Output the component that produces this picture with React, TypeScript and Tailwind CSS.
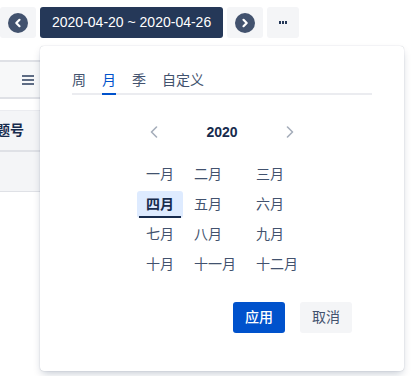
import { useState } from 'react';

const MONTHS = ['一月', '二月', '三月', '四月', '五月', '六月', '七月', '八月', '九月', '十月', '十一月', '十二月'];
const TABS = ['周', '月', '季', '自定义'];

function CircleChevron({ dir }: { dir: 'left' | 'right' }) {
  return (
    <svg width="20" height="20" viewBox="0 0 20 20">
      <circle cx="10" cy="10" r="10" fill="#42526E" />
      <path
        d={dir === 'left' ? 'M11.5 6.8 L8.3 10 L11.5 13.2' : 'M8.5 6.8 L11.7 10 L8.5 13.2'}
        stroke="#fff"
        strokeWidth="2.2"
        fill="none"
        strokeLinecap="round"
        strokeLinejoin="round"
      />
    </svg>
  );
}

function Chevron({ dir }: { dir: 'left' | 'right' }) {
  return (
    <svg width="8" height="12" viewBox="0 0 8 12">
      <path
        d={dir === 'left' ? 'M6.5 1 L1.5 6 L6.5 11' : 'M1.5 1 L6.5 6 L1.5 11'}
        stroke="#A5ADBA"
        strokeWidth="1.6"
        fill="none"
        strokeLinecap="round"
        strokeLinejoin="round"
      />
    </svg>
  );
}

export default function App() {
  const [tab, setTab] = useState(1);
  const [month, setMonth] = useState(3);

  return (
    <div
      className="relative w-[415px] h-[376px] bg-white overflow-hidden"
      style={{ fontFamily: '"Liberation Sans", "Noto Sans CJK SC", sans-serif' }}
    >
      <div className="flex gap-[4px] pt-[7px]">
        <button className="w-[36px] h-[31px] rounded-[3px] bg-[#F4F5F7] flex items-center justify-center">
          <CircleChevron dir="left" />
        </button>
        <button className="h-[31px] px-[12px] rounded-[3px] bg-[#253858] text-white text-[14px]">
          2020-04-20 ~ 2020-04-26
        </button>
        <button className="w-[36px] h-[31px] rounded-[3px] bg-[#F4F5F7] flex items-center justify-center">
          <CircleChevron dir="right" />
        </button>
        <button className="w-[32px] h-[31px] rounded-[3px] bg-[#F4F5F7] flex items-center justify-center gap-[1px]">
          <span className="w-[2px] h-[3px] bg-[#253858]" />
          <span className="w-[2px] h-[3px] bg-[#253858]" />
          <span className="w-[2px] h-[3px] bg-[#253858]" />
        </button>
      </div>

      {/* table behind the popup */}
      <div className="mt-[22px] w-[380px]">
        <div className="h-[39px] border-y-2 border-[#DFE1E6] bg-[#F7F8F9] flex items-center pl-[22px]">
          <svg width="12" height="10" viewBox="0 0 12 10">
            <rect x="0" y="0" width="12" height="2" fill="#5E6C84" />
            <rect x="0" y="4" width="12" height="2" fill="#5E6C84" />
            <rect x="0" y="8" width="12" height="2" fill="#5E6C84" />
          </svg>
        </div>
        <div className="h-[11px]" />
        <div className="h-[42px] border-t border-t-[#EBECF0] border-b-2 border-b-[#DFE1E6] bg-[#F4F5F7] flex items-center">
          <span className="ml-[-4px] text-[14px] font-semibold text-[#172B4D]">题号</span>
        </div>
        <div className="h-[40px] border-b border-[#DFE1E6] bg-[#F4F5F7]" />
      </div>

      {/* popup */}
      <div className="absolute left-[40px] top-[46px] w-[364px] h-[325px] rounded-[4px] bg-white shadow-[0_4px_8px_-2px_rgba(9,30,66,0.25),0_0_1px_rgba(9,30,66,0.31)] px-[32px] pt-[24px]">
        <div className="flex gap-[16px] border-b-2 border-[#EBECF0]">
          {TABS.map((t, i) => (
            <button
              key={t}
              onClick={() => setTab(i)}
              className={`relative pb-[3px] text-[14px] leading-[20px] ${i === tab ? 'text-[#0052CC]' : 'text-[#42526E]'}`}
            >
              {t}
              {i === tab && <span className="absolute left-0 right-0 bottom-[-2px] h-[2px] bg-[#0052CC]" />}
            </button>
          ))}
        </div>

        <div className="mt-[27px] flex items-center justify-center gap-[48px] h-[20px]">
          <Chevron dir="left" />
          <span className="text-[14px] font-bold text-[#172B4D]">2020</span>
          <Chevron dir="right" />
        </div>

        <div className="mt-[19px] grid grid-cols-[auto_auto_auto] justify-center gap-x-[2px] gap-y-[3px]">
          {MONTHS.map((m, i) => (
            <button
              key={m}
              onClick={() => setMonth(i)}
              className={`relative h-[27px] px-[9px] text-left text-[14px] leading-[27px] rounded-[3px] ${
                i === month ? 'bg-[#DEEBFF] font-bold text-[#172B4D]' : 'text-[#42526E]'
              }`}
            >
              {m}
              {i === month && <span className="absolute left-[2px] right-[2px] bottom-0 h-[2px] bg-[#172B4D]" />}
            </button>
          ))}
        </div>

        <div className="mt-[24px] flex justify-end gap-[15px] pr-[20px]">
          <button className="w-[52px] h-[31px] rounded-[3px] bg-[#0052CC] text-white text-[14px] font-medium">应用</button>
          <button className="w-[52px] h-[31px] rounded-[3px] bg-[#F4F5F7] text-[#42526E] text-[14px]">取消</button>
        </div>
      </div>
    </div>
  );
}
